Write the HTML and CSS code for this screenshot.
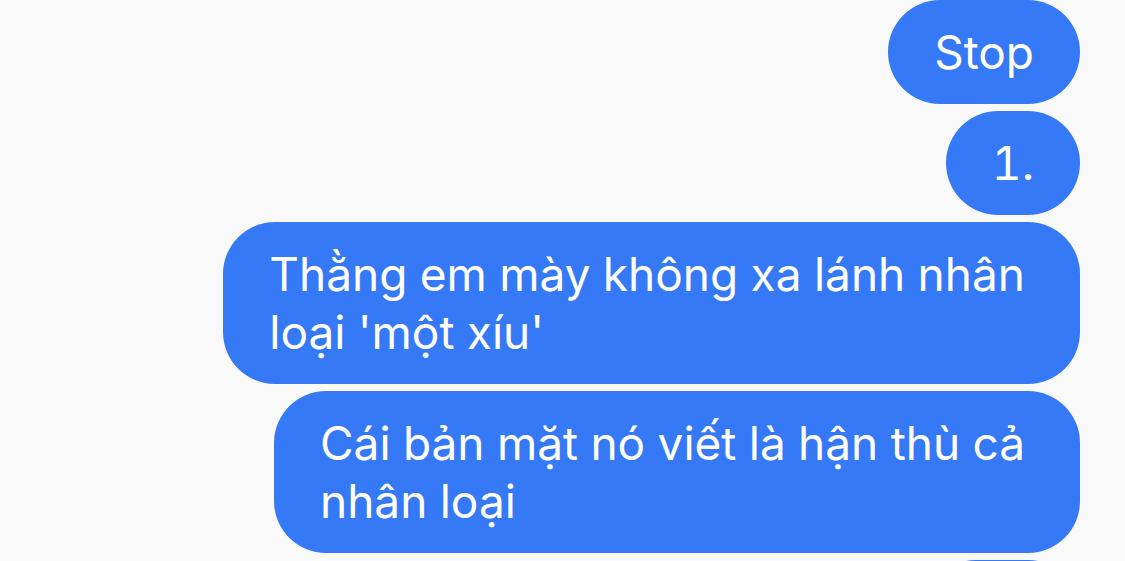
FILE: index.html
```html
<!doctype html>
<html lang="vi">
    <head>
        <meta charset="UTF-8" />
        <meta name="viewport" content="width=device-width, initial-scale=1.0" />
        <title>Tin nhắn</title>
        <link rel="stylesheet" href="styles.css">
    </head>
    <body>
        <div class="thread">
            <div class="bubble">Stop</div>
            <div class="bubble">1.</div>
            <div class="bubble bubble-wrap">Thằng em mày không xa lánh nhân<br />loại 'một xíu'</div>
            <div class="bubble bubble-wrap">Cái bản mặt nó viết là hận thù cả<br />nhân loại</div>
            <div class="bubble bubble-next"></div>
        </div>
    </body>
</html>
```

FILE: styles.css
```css
body {
    margin: 0;
    padding: 0;
    background: #f9f9f9;
    font-family: Inter, "Noto Sans", sans-serif;
    overflow: hidden;
}
.thread {
    display: flex;
    flex-direction: column;
    align-items: flex-end;
    gap: 7px;
    padding: 0 45px 0 0;
}
.bubble {
    box-sizing: border-box;
    padding: 23px 46px;
    background: #3579f6;
    color: #fff;
    font-size: 46px;
    line-height: 58px;
    font-variant-numeric: tabular-nums;
    white-space: nowrap;
    border-radius: 52px;
}
.bubble-wrap {
    padding-right: 55px;
}
.bubble-next {
    width: 156px;
    height: 104px;
}
```
